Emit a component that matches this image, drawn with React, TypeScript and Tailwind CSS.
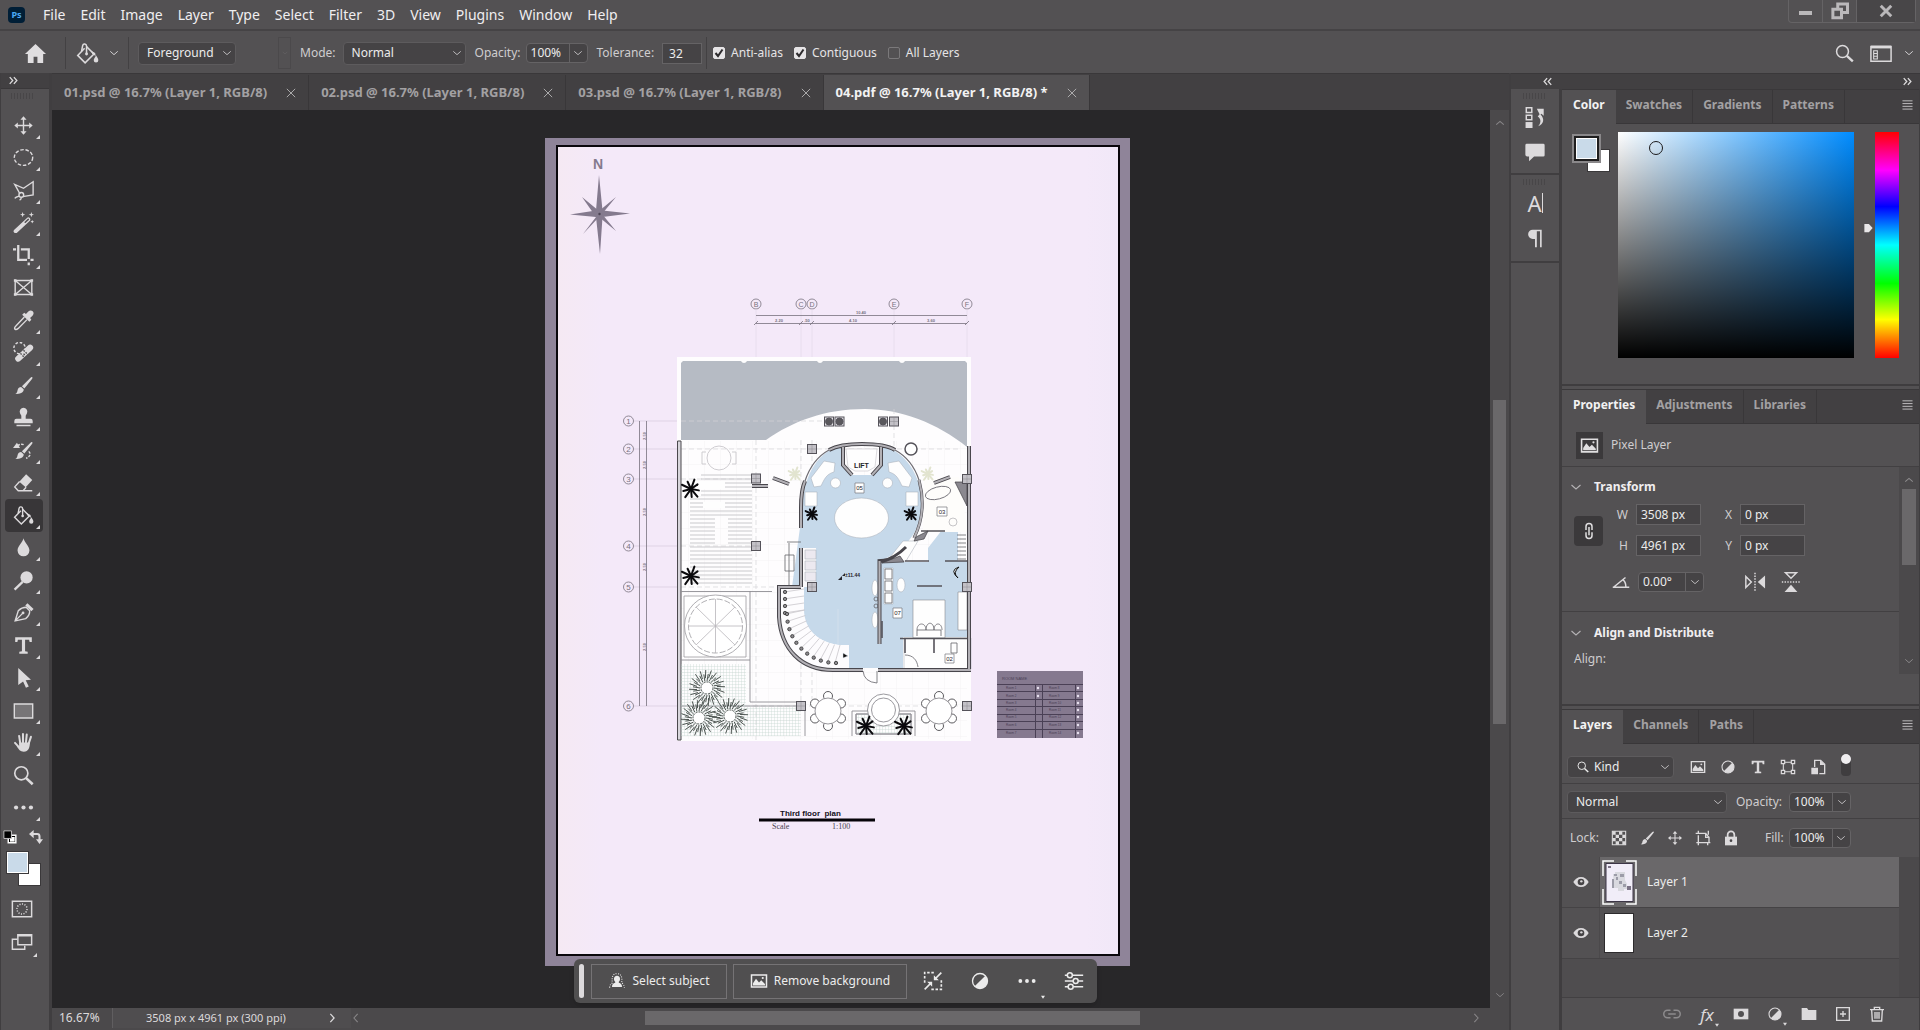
import { useState, type ReactNode } from 'react'

const line = { fill: 'none', stroke: 'currentColor', strokeWidth: 1.6 }

interface IconProps {
  children: ReactNode
  className?: string
}

function Icon({ children, className = 'h-6 w-6' }: IconProps) {
  return (
    <svg viewBox="0 0 24 24" className={`shrink-0 ${className}`} fill="currentColor" aria-hidden="true">
      {children}
    </svg>
  )
}

const moveShape = (
  <>
    <path d="M12 4v16M4 12h16" {...line} />
    <path d="M12 1.500l3.500 4h-7zM12 22.500l3.500-4h-7zM1.500 12l4-3.500v7zM22.500 12l-4-3.500v7z" />
  </>
)

const brushShape = (
  <>
    <path d="M22 2.500c.6.500.2 1.300-.3 2L13 15.300l-2.800-2.500L20 3c.7-.7 1.400-1 2-.5z" />
    <path d="M9.300 13.600l2.900 2.700c.3 3.200-3.200 5.900-9.700 5.200 2-1 2.300-2.200 2.700-4.200.5-2.400 2.200-3.700 4.100-3.700z" />
  </>
)

const bucketShape = (
  <>
    <path d="M9 6.500L1.800 14l7.700 7.700 9.200-9.200L11 4.800" {...line} />
    <path d="M11 12.500V4.200C11 2 7.600 1.200 7 3.600L5.800 9.500" {...line} />
    <circle cx="11" cy="12.500" r="1.500" />
    <path d="M21 14c1.500 2.500 2.300 3.700 2.300 5a2.400 2.400 0 0 1-4.800 0c0-1.300 1-2.500 2.500-5zM15.500 9l4.500 2.500.5 3-3.500-2z" />
  </>
)

const contrastShape = (
  <>
    <circle cx="12" cy="12" r="9" {...line} />
    <path d="M18.400 5.600a9 9 0 1 1-12.800 12.800z" />
  </>
)

const pictureShape = (
  <>
    <path d="M2 4h20v16H2z" {...line} strokeWidth="2" />
    <path d="M4 18v-3l4-6 4 5 3-3 5 5v2z" />
    <circle cx="17" cy="8" r="1.400" />
  </>
)

const searchShape = (
  <>
    <circle cx="9.500" cy="9.500" r="7.500" {...line} strokeWidth="1.900" />
    <path d="M15 15l7.500 7" {...line} strokeWidth="3" />
  </>
)

const typeShape = <path d="M2.500 2.500h19V8H19l-.6-2.600h-4.600v13.300l3 .5v2.300H7.200v-2.300l3-.5V5.400H5.600L5 8H2.500z" />

const chevronDown = <path d="M3 8l9 8 9-8" {...line} strokeWidth="2.200" />

const tools: { name: string; icon: ReactNode; flyout?: boolean }[] = [
  { name: 'Move', flyout: true, icon: moveShape },
  {
    name: 'Elliptical Marquee',
    flyout: true,
    icon: <ellipse cx="12" cy="12" rx="10.500" ry="9" {...line} strokeDasharray="4 2" />,
  },
  {
    name: 'Polygonal Lasso',
    flyout: true,
    icon: (
      <>
        <path d="M8 16L2 5l10 4.500L23 2v15l-12 2" {...line} />
        <circle cx="9.500" cy="17" r="2.700" {...line} />
        <path d="M7 18.500c-2 .5-4 1-5 2.500M9.500 20c0 1.500-1 2.500-2 3" {...line} />
      </>
    ),
  },
  {
    name: 'Magic Wand',
    flyout: true,
    icon: (
      <>
        <path d="M3 22L17.500 8.500" {...line} strokeWidth="4.500" strokeLinecap="round" />
        <path d="M14 11.700l3.500-3.200" stroke="#535153" strokeWidth="1.800" strokeLinecap="round" />
        <path d="M11 0l.8 2.200L14 3l-2.200.8L11 6l-.8-2.200L8 3l2.200-.8zM21 0l.8 2.200L24 3l-2.200.8L21 6l-.8-2.200L18 3l2.200-.8zM22 9l.6 1.400 1.400.6-1.400.6L22 13l-.6-1.400L20 11l1.400-.6z" />
      </>
    ),
  },
  {
    name: 'Crop',
    flyout: true,
    icon: <path d="M6 0v17h10M9 5h9v11M0 5h3.500M18 20v3M20 17h3.500" {...line} strokeWidth="2.600" />,
  },
  {
    name: 'Frame',
    icon: (
      <>
        <path d="M2.500 4h19v16h-19zM2.500 4l19 16M21.500 4l-19 16" {...line} />
        <path d="M1 2.500h3v3H1zM20 2.500h3v3h-3zM1 18.500h3v3H1zM20 18.500h3v3h-3z" />
      </>
    ),
  },
  {
    name: 'Eyedropper',
    flyout: true,
    icon: (
      <>
        <path d="M13 8L3 18.500c-1.500 1.500-1.500 3-.5 3.500s2 .2 3.500-1L16 11" {...line} />
        <path d="M22.500 1.500c-1.500-1.500-3.500-1.300-5 .2l-2.700 2.800-2-1.500-2.300 2.300 8.200 8.200 2.300-2.300-1.500-2 2.800-2.700c1.500-1.500 1.700-3.500.2-5z" />
      </>
    ),
  },
  {
    name: 'Spot Healing Brush',
    flyout: true,
    icon: (
      <>
        <circle cx="7.500" cy="7" r="6.500" {...line} strokeDasharray="3 2" />
        <path d="M6 19L19.500 6.500" {...line} strokeWidth="7" strokeLinecap="round" />
        <path d="M8.500 13l6 6M12 9.500l6 6M12 13.500l2.500 2" stroke="#535153" strokeWidth="1.600" strokeDasharray="2 1.300" />
      </>
    ),
  },
  { name: 'Brush', flyout: true, icon: brushShape },
  {
    name: 'Clone Stamp',
    flyout: true,
    icon: (
      <path d="M12 1a4.300 4.300 0 0 1 4 6l-1.500 3v3.500H20a2.500 2.500 0 0 1 2.500 2.500v2.500h-21V16A2.500 2.500 0 0 1 4 13.500h5.500V10L8 7a4.300 4.300 0 0 1 4-6zM4 20.200h16v1.800H4z" />
    ),
  },
  {
    name: 'History Brush',
    flyout: true,
    icon: (
      <>
        {brushShape}
        <path d="M5 6.500c3-2 6-2 8.500-.5M18 13c2 2 3 5-3 8" {...line} strokeDasharray="3 1.500" />
        <path d="M0 9l4.500-6L8 9z" />
      </>
    ),
  },
  {
    name: 'Eraser',
    flyout: true,
    icon: (
      <>
        <path d="M15 2.500L22 9l-7.500 8.500-7.300-6.500z" />
        <path d="M7.500 10.800L2 17l4 4.500h5.500l3.500-4M6 21.500h16" {...line} />
      </>
    ),
  },
  { name: 'Paint Bucket', flyout: true, icon: bucketShape },
  {
    name: 'Blur',
    flyout: true,
    icon: <path d="M12 1.500c.9 5 6.800 8.500 6.800 14A6.700 6.700 0 0 1 12 22a6.700 6.700 0 0 1-6.800-6.500c0-5.500 5.900-9 6.800-14z" />,
  },
  {
    name: 'Dodge',
    flyout: true,
    icon: (
      <>
        <circle cx="15.500" cy="8.500" r="7" />
        <path d="M1.800 22.500L11 13.500" {...line} strokeWidth="2.600" />
      </>
    ),
  },
  {
    name: 'Pen',
    flyout: true,
    icon: (
      <>
        <path d="M2.500 21.500L6 10c3-3 6-4 9-4l4 4c.5 4-1.500 6.500-4.500 9zM3 21l8-8" {...line} />
        <circle cx="11.500" cy="12.500" r="1.600" />
        <path d="M16.500 1.500l7 6.500-2.500 2.500-7-6.500z" />
      </>
    ),
  },
  { name: 'Horizontal Type', flyout: true, icon: typeShape },
  {
    name: 'Path Selection',
    flyout: true,
    icon: <path d="M6 1l14.500 13.500-6 .6 3.500 7.200-3.200 1.500-3.300-7.200L6 20.500z" />,
  },
  {
    name: 'Rectangle',
    flyout: true,
    icon: <path d="M1.500 4.500h21v16h-21z" fill="#777577" stroke="currentColor" strokeWidth="1.600" />,
  },
  {
    name: 'Hand',
    flyout: true,
    icon: (
      <>
        <path d="M8.300 13L7 4.500M11.400 12V2.200M14.800 12l.9-9M18 13l2.500-7.500M6.500 17L2.300 12.500" {...line} strokeWidth="2.300" strokeLinecap="round" />
        <path d="M7 12h12.300c0 5.500-1.500 10.500-7 10.500-4 0-6-2.500-8-6.500l2.700.5z" />
      </>
    ),
  },
  { name: 'Zoom', icon: searchShape },
  {
    name: 'Edit Toolbar',
    flyout: true,
    icon: (
      <>
        <circle cx="3.500" cy="12" r="2.400" />
        <circle cx="12" cy="12" r="2.400" />
        <circle cx="20.500" cy="12" r="2.400" />
      </>
    ),
  },
]

const menus = ['File', 'Edit', 'Image', 'Layer', 'Type', 'Select', 'Filter', '3D', 'View', 'Plugins', 'Window', 'Help']

const documents = [
  '01.psd @ 16.7% (Layer 1, RGB/8)',
  '02.psd @ 16.7% (Layer 1, RGB/8)',
  '03.psd @ 16.7% (Layer 1, RGB/8)',
  '04.pdf @ 16.7% (Layer 1, RGB/8) *',
]

function Dropdown({ label, value, className, indent = 'pl-2' }: { label: string; value: string; className: string; indent?: string }) {
  return (
    <span className={`relative flex items-center ${className}`}>
      <select
        aria-label={label}
        className={`h-full w-full appearance-none rounded-sm border border-[#5d5b5d] bg-[#454345] text-[#ececec] ${indent}`}
      >
        <option>{value}</option>
      </select>
      <Icon className="pointer-events-none absolute right-1 h-2.5 w-2.5 text-[#c4c2c4]">{chevronDown}</Icon>
    </span>
  )
}

function ValueField({ label, value, className = 'w-[62px]' }: { label: string; value: string; className?: string }) {
  return (
    <span className={`flex h-5 rounded-sm border border-[#656365] bg-[#454345] ${className}`}>
      <input aria-label={label} defaultValue={value} className="w-full min-w-0 bg-transparent pl-1 text-[#ececec]" />
      <button aria-label={`${label} slider`} className="grid w-[18px] shrink-0 place-items-center border-l border-[#656365]">
        <Icon className="h-2.5 w-2.5 text-[#c4c2c4]">{chevronDown}</Icon>
      </button>
    </span>
  )
}

function CheckOption({ label, checked }: { label: string; checked?: boolean }) {
  return (
    <label className="flex items-center gap-1.5 text-[#e6e4e6]">
      <span className="grid place-items-center">
        <input
          type="checkbox"
          defaultChecked={checked}
          className="peer col-start-1 row-start-1 h-3 w-3 appearance-none rounded-xs border border-[#7b797b] checked:border-[#e6e4e6] checked:bg-[#e6e4e6]"
        />
        <Icon className="pointer-events-none invisible col-start-1 row-start-1 h-3 w-3 text-[#2d2b2d] peer-checked:visible">
          <path d="M5 12l5 6 9-13" {...line} strokeWidth="4" />
        </Icon>
      </span>
      {label}
    </label>
  )
}

function PanelTabs({ tabs }: { tabs: string[] }) {
  return (
    <div className="flex h-[35px] shrink-0 border-t border-[#3a383a] bg-[#424042] font-bold">
      {tabs.map((tab, i) => (
        <button
          key={tab}
          className={
            i === 0
              ? 'bg-[#535153] px-[11px] pb-1 text-[#f2f2f2]'
              : 'border-r border-b border-[#393739] px-[10px] pb-1 text-[#a3a1a3]'
          }
        >
          {tab}
        </button>
      ))}
      <span className="flex-1 border-b border-[#393739]" />
      <button aria-label="Panel menu" className="border-b border-[#393739] pr-1.5 pb-1 text-[#c8c6c8]">
        <Icon className="h-[11px] w-[11px]">
          <path d="M1 4h22M1 10h22M1 16h22M1 22h22" {...line} strokeWidth="2" />
        </Icon>
      </button>
    </div>
  )
}

function Divider() {
  return <span className="mx-1 h-8 w-px bg-[#434143]" />
}

function MenuBar() {
  return (
    <header className="flex h-[31px] shrink-0 items-center border-b-2 border-[#454345] bg-[#535153]">
      <span className="ml-2 grid h-4 w-[17px] place-items-center rounded-sm bg-[#001e36] text-[9px] font-bold text-[#4ba8f5]">Ps</span>
      <nav className="ml-[10px] flex text-sm text-[#f0eef0]">
        {menus.map(menu => (
          <button key={menu} className="pr-[7px] pl-2">{menu}</button>
        ))}
      </nav>
      <div className="mr-1 mb-[6px] ml-auto flex h-[23px] self-start rounded-b border border-t-0 border-[#656365] text-[#bab8ba]">
        <button aria-label="Minimize" className="grid w-[34px] place-items-center border-r border-[#656365] pt-1">
          <span className="h-1 w-[13px] bg-current" />
        </button>
        <button aria-label="Restore" className="grid w-[34px] place-items-center border-r border-[#656365]">
          <Icon className="h-[18px] w-[18px]">
            <path d="M9 8V2.500h13V14h-6M2.500 9.500H14V21H2.500z" {...line} strokeWidth="4" />
          </Icon>
        </button>
        <button aria-label="Close" className="grid w-[58px] place-items-center bg-[#484648]">
          <Icon className="h-[14px] w-[14px]">
            <path d="M3 3l18 18M21 3L3 21" {...line} strokeWidth="5" />
          </Icon>
        </button>
      </div>
    </header>
  )
}

function OptionsBar() {
  return (
    <div className="flex h-[42px] shrink-0 items-center bg-[#535153] pt-0.5 pl-6 text-[#cfcdcf]">
      <button aria-label="Home" className="text-[#e0dee0]">
        <Icon className="h-[23px] w-[23px]">
          <path d="M12 2L1 12.500h3V22h6v-6.500h4V22h6v-9.500h3z" />
        </Icon>
      </button>
      <span className="mr-[10px] ml-[18px] h-8 w-px bg-[#434143]" />
      <button aria-label="Paint Bucket presets" className="flex items-center gap-2.5 text-[#dcdadc]">
        <Icon className="h-[23px] w-[23px]">{bucketShape}</Icon>
        <Icon className="h-2.5 w-2.5">{chevronDown}</Icon>
      </button>
      <span className="mx-[9px] h-8 w-px bg-[#434143]" />
      <Dropdown label="Fill source" value="Foreground" className="h-[23px] w-[98px]" indent="pl-2" />
      <span className="ml-[42px] grid h-8 w-[13px] place-items-center border border-[#4b494b] text-[#6a686a]">
        <Icon className="h-1.5 w-1.5">{chevronDown}</Icon>
      </span>
      <span className="ml-[9px]">Mode:</span>
      <Dropdown label="Mode" value="Normal" className="ml-[7px] h-[23px] w-[123px]" />
      <span className="ml-[9px]">Opacity:</span>
      <span className="ml-[5px]"><ValueField label="Opacity" value="100%" /></span>
      <label className="ml-[9px] flex items-center gap-[8px]">
        Tolerance:
        <input defaultValue="32" className="h-[21px] w-10 border border-[#656365] bg-[#454345] pl-1.5 text-[#ececec]" />
      </label>
      <Divider />
      <div className="ml-0.5 flex gap-[11px]">
        <CheckOption label="Anti-alias" checked />
        <CheckOption label="Contiguous" checked />
        <CheckOption label="All Layers" />
      </div>
      <div className="mr-[6px] ml-auto flex items-center gap-4 text-[#dcdadc]">
        <button aria-label="Search"><Icon className="h-[19px] w-[19px]">{searchShape}</Icon></button>
        <button aria-label="Workspace" className="flex items-center gap-3">
          <Icon className="h-6 w-[22px]">
            <path d="M1 5h22v16H1z" {...line} />
            <path d="M1 4h22v3H1z" />
            <path d="M4 9.500h4v3H4zM4 12.500h4v3H4zM4 15.500h4v3H4z" {...line} strokeWidth="1.200" />
          </Icon>
          <Icon className="h-2.5 w-2.5">{chevronDown}</Icon>
        </button>
      </div>
    </div>
  )
}

function CollapseRow({ back }: { back?: boolean }) {
  return (
    <Icon className="h-[9px] w-[9px] text-[#dcdadc]">
      <path d={back ? 'M11 3l-8 9 8 9M22 3l-8 9 8 9' : 'M2 3l8 9-8 9M13 3l8 9-8 9'} {...line} strokeWidth="3.500" />
    </Icon>
  )
}

function Grip() {
  return <span className="h-1.5 w-6 bg-[repeating-linear-gradient(to_right,#484648_0_1px,transparent_1px_3px)]" />
}

function Toolbar() {
  return (
    <aside className="flex w-[50px] shrink-0 flex-col border-x border-[#403e40] bg-[#535153] text-[#dcdadc]">
      <div className="flex h-4 shrink-0 items-center border-b border-[#3a383a] bg-[#424042] pl-2"><CollapseRow /></div>
      <div className="flex h-[20px] shrink-0 pt-1 pl-2.5"><Grip /></div>
      <div className="flex h-[715px] shrink-0 flex-col">
        {tools.map(({ name, icon, flyout }) => (
          <button
            key={name}
            aria-label={name}
            className={`relative ml-1 grid w-[38px] flex-1 place-items-center pr-0.5 ${name === 'Paint Bucket' ? 'rounded-sm bg-[#383638]' : ''}`}
          >
            <Icon className="h-[21px] w-[21px]">{icon}</Icon>
            {flyout && (
              <Icon className="absolute right-[3px] bottom-[3px] h-1 w-1"><path d="M24 0v24H0z" /></Icon>
            )}
          </button>
        ))}
      </div>
      <div className="mt-[6px] flex items-center justify-between pr-1.5 pl-0.5">
        <button aria-label="Default colors">
          <Icon className="h-[14px] w-[14px]">
            <path d="M9 9h13v13H9z" fill="#000" stroke="#fff" strokeWidth="2.500" />
            <path d="M12 12h8v8h-8z" fill="#fff" />
            <path d="M1.500 1.500h13v13h-13z" fill="#000" stroke="#d0ced0" strokeWidth="1.500" />
          </Icon>
        </button>
        <button aria-label="Switch colors">
          <Icon className="h-[14px] w-[14px]">
            <path d="M6 7h8c3 0 4 2 4 4v7" {...line} strokeWidth="3.500" />
            <path d="M0 7l8-7v14zM18 24l-6-8h12z" />
          </Icon>
        </button>
      </div>
      <div className="relative mt-[7px] ml-[5px] h-[35px] w-[35px]">
        <span className="absolute right-0 bottom-0 h-[23px] w-[23px] border border-[#3a383a] bg-white" />
        <span className="absolute top-0 left-0 h-[23px] w-[23px] border border-[#3a383a] bg-[#c9dae9] ring-1 ring-white ring-inset" />
      </div>
      <button aria-label="Quick mask" className="mt-[12px] ml-[10px] w-[22px]">
        <Icon className="h-[22px] w-[22px]">
          <path d="M1.500 3.500h21v17h-21z" {...line} />
          <circle cx="12" cy="12" r="5.500" {...line} strokeDasharray="1.200 1.600" />
        </Icon>
      </button>
      <button aria-label="Screen mode" className="relative mt-[11px] ml-[10px] w-[30px]">
        <Icon className="h-[22px] w-[22px]">
          <path d="M7 9H1.500v11H15v-4" {...line} />
          <path d="M7.500 4h15v11h-15z" {...line} />
          <path d="M7 3.500h16V6H7z" />
        </Icon>
        <Icon className="absolute right-1 -bottom-1 h-1 w-1"><path d="M24 0v24H0z" /></Icon>
      </button>
    </aside>
  )
}

/* floor plan */

const petal = (cx: number, cy: number, deg: number, r: number) => {
  const a = (deg * Math.PI) / 180
  return [cx + Math.cos(a) * r, cy + Math.sin(a) * r]
}

function Palm({ x, y, r = 10, color = '#0b0a0d' }: { x: number; y: number; r?: number; color?: string }) {
  return (
    <g stroke={color} strokeWidth="2" strokeLinecap="round">
      {[10, 50, 85, 125, 165, 205, 245, 290, 325].map((deg, i) => {
        const [ex, ey] = petal(x, y, deg, i % 2 ? r : r - 2)
        return <path key={deg} d={`M${x} ${y}L${ex} ${ey}`} />
      })}
    </g>
  )
}

function Bush({ x, y }: { x: number; y: number }) {
  return (
    <g stroke="#3b433f" strokeWidth=".9" fill="none">
      {Array.from({ length: 40 }, (_, i) => {
        const outer = i % 2 ? 18 : 14
        const [sx, sy] = petal(x, y, i * 9, i % 2 ? 10 : 7)
        const [ex, ey] = petal(x, y, i * 9 + 5, outer)
        return <path key={i} d={`M${sx} ${sy}L${ex} ${ey}`} />
      })}
      <circle cx={x} cy={y} r="6" fill="#fff" strokeDasharray="2 1" />
    </g>
  )
}

function Post({ x, y, round }: { x: number; y: number; round?: boolean }) {
  return (
    <g stroke="#55535a" strokeWidth="1">
      <rect x={x - 4.5} y={y - 4.5} width="9" height="9" fill={round ? '#e8e6ea' : '#c3c1c7'} />
      {round ? <circle cx={x} cy={y} r="3.500" fill="#5a585d" /> : <path d={`M${x} ${y - 4}v8M${x - 4} ${y}h8`} stroke="#8b898f" strokeWidth=".5" />}
    </g>
  )
}

function RoundTable({ x, y }: { x: number; y: number }) {
  return (
    <g stroke="#4a484d" fill="#fff" strokeWidth=".9">
      {[30, 90, 150, 210, 270, 330].map(deg => {
        const [cx, cy] = petal(x, y, deg, 15)
        return <circle key={deg} cx={cx} cy={cy} r="4.500" />
      })}
      <circle cx={x} cy={y} r="13" stroke="#8b898e" />
    </g>
  )
}

const gridLetters: [string, number][] = [['B', 756], ['C', 801], ['D', 812], ['E', 894], ['F', 967]]
const gridNumbers: [string, number][] = [['1', 421], ['2', 449], ['3', 479], ['4', 546], ['5', 587], ['6', 706]]
const spans: [string, number, number][] = [['2.20', 779, 322], ['.50', 807, 322], ['4.10', 853, 322], ['3.60', 931, 322], ['10.40', 861, 314]]
const stairs = Array.from({ length: 15 }, (_, i) => i)

function FloorPlan() {
  return (
    <svg viewBox="545 138 585 828" className="absolute top-7 left-[493px] h-[828px] w-[585px] font-['Liberation_Sans',sans-serif]">
      <defs>
        <pattern id="tiles" width="3" height="3" patternUnits="userSpaceOnUse">
          <path d="M0 0h3M0 0v3" stroke="#b9ccc4" strokeWidth=".6" />
        </pattern>
        <pattern id="paving" width="16" height="16" patternUnits="userSpaceOnUse">
          <path d="M0 0h16M0 0v16" stroke="#efeef1" strokeWidth=".7" />
        </pattern>
        <linearGradient id="paper" x2="1">
          <stop offset="0" stopColor="#f5e9f3" />
          <stop offset=".08" stopColor="#f4e9f9" />
          <stop offset=".94" stopColor="#f4e9f9" />
          <stop offset="1" stopColor="#f1e8f8" />
        </linearGradient>
      </defs>
      <rect x="545" y="138" width="585" height="828" fill="#8f8499" />
      <rect x="557" y="146" width="562" height="809" fill="url(#paper)" stroke="#0a070c" strokeWidth="2" />

      <g fill="#847a8e">
        <text x="598" y="169" fontSize="14" fontWeight="700" textAnchor="middle">N</text>
        <path d="M599 175l3.500 35.500L630 213.500l-27.500 3.500L600 254l-4-37-26-2.500 26-4z" />
        <path d="M582 197l17 14 17-14-14 17 14 17-17-14-16 17 13-17z" />
        <circle cx="599.500" cy="214" r="1.200" fill="#4b4254" />
      </g>

      <g stroke="#77717e" strokeWidth=".8" fill="none">
        {gridLetters.map(([letter, x]) => (
          <g key={letter}>
            <circle cx={x} cy="304" r="5" />
            <text x={x} y="306.500" fontSize="7" textAnchor="middle" fill="#77717e" stroke="none">{letter}</text>
            <path d={`M${x} 309v50`} stroke="#e6dbec" />
            <path d={`M${x - 2} 325l4-4`} />
          </g>
        ))}
        {gridNumbers.map(([n, y]) => (
          <g key={n}>
            <circle cx="628.500" cy={y} r="5" />
            <text x="628.500" y={y + 3} fontSize="8" textAnchor="middle" fill="#77717e" stroke="none">{n}</text>
            <path d={`M634 ${y}h43`} stroke="#d6cbdc" strokeWidth=".7" />
          </g>
        ))}
        <path d="M756 315.500h211M756 323.500h211M639.500 421v285M646.500 421v285" />
      </g>
      <g fill="#77717e" fontSize="4" fontWeight="700">
        {spans.map(([text, x, y]) => <text key={text} x={x} y={y} textAnchor="middle">{text}</text>)}
        {[436, 465, 512, 567, 647].map(y => (
          <text key={y} x="646" y={y} textAnchor="middle" transform={`rotate(-90 646 ${y})`}>2.50</text>
        ))}
      </g>

      {/* plot and terrace */}
      <path d="M677 357h294v384H677z" fill="#fefdfe" />
      <path d="M677 441h290v298H677z" fill="url(#paving)" />
      <path d="M681 363l2-2h58q1 2 3 2t3-2h70q1 2 3 2t3-2h76q1 2 3 2t3-2h60l2 2v84c-30-24-66-38-102-38-40 0-72 12-99 31H681z" fill="#b6bbc4" />
      <g stroke="#d6d4d9" strokeWidth=".7" strokeDasharray="5 3">
        <path d="M681 421h150M681 449h280M681 479h80M681 546h75M681 587h290M681 706h290M801 440v270M812 440v260M894 409v40M756 440v300" />
      </g>
      <path d="M677.500 441v299h3.500V441z" fill="#d8d6dc" stroke="#4a484d" strokeWidth="1" />
      <g fill="none" stroke="#c9c7cc" strokeWidth=".9">
        <circle cx="719" cy="458" r="12" />
        <path d="M706 452h-4v12h4M732 452h4v12h-4" />
      </g>
      <g stroke="#c4c3c7" strokeWidth=".9">
        {Array.from({ length: 28 }, (_, i) => {
          const y = 475 + i * 4
          return y > 518 && y < 547
            ? <path key={i} d={`M690 ${y}h25M728 ${y}h24`} />
            : <path key={i} d={`M${i < 6 ? 701 : 690} ${y}H752`} />
        })}
      </g>
      <path d="M700 481h25v8h-25zM703 502h22v6h-22z" fill="#fefefe" />
      <path d="M681 591.500h91M681 660h69M750 591v111h50M681 706h120M805 706v30" fill="none" stroke="#8f8d93" strokeWidth=".9" />
      <path d="M681 664h65v42h55v30H681z" fill="url(#tiles)" />

      {/* gazebo */}
      <g fill="#fff" stroke="#9c9aa0" strokeWidth=".8">
        <path d="M684 596h62v61h-62z" />
        <circle cx="715.500" cy="626" r="31" />
        <circle cx="715.500" cy="626" r="27" strokeDasharray="6 2" />
        <path d="M715.500 599v54M688 626h55M696 607l39 38M735 607l-39 38" stroke="#b7b5ba" />
      </g>
      <Bush x={707} y={688} />
      <Bush x={699} y={718} />
      <Bush x={730} y={716} />

      {/* blue rooms */}
      <path d="M803 505C803 475 820 449 842 446l1 18 9 11h20l9-11 1-18c22 4 40 29 40 59 0 20-12 44-42 56v1h48v-14l14-18h16v31h10v76h-65v31h-55V645h-10c-24-4-36-20-36-36v-22h-10z" fill="#c6d9ea" />
      <path d="M803 548h13v39h-13z" fill="#fbfafc" />
      <g fill="#fefefe" stroke="#a2a9b2" strokeWidth=".5">
        <ellipse cx="861.500" cy="518" rx="27" ry="20" />
        <circle cx="835.500" cy="483" r="5" />
        <circle cx="887.500" cy="483" r="5" />
        <path d="M811 478l13-17 11 2-1 9c-8 2-10 8-13 14l-7 1zM912 478l-13-17-11 2 1 9c8 2 10 8 13 14l7 1z" />
        <path d="M805 492h12v14h-12zM906 492h12v14h-12z" />
        <path d="M805 550h11v9h-11zM805 561h11v9h-11zM805 572h11v9h-11z" fill="#ece9f0" />
        <path d="M903 541h15l-12 20h-19zM884 568h9v36h-9z" />
        <path d="M913 600h32v38h-32zM958 592h9v38h-9z" stroke="#77757b" />
        <path d="M904 638h67v31h-67z" />
        <ellipse cx="901" cy="585" rx="4" ry="7" />
        <ellipse cx="875" cy="588" rx="3" ry="8" />
        <ellipse cx="875" cy="620" rx="3" ry="8" />
      </g>
      <path d="M924 479l35-2 9 55h-45z" fill="#fefdfb" />
      <g fill="none" stroke="#66646b" strokeWidth=".8">
        <ellipse cx="938" cy="493" rx="13" ry="6" transform="rotate(-15 938 493)" />
        <path d="M885 569h7v10h-7zM885 581h7v10h-7zM885 593h7v10h-7zM917 630c0-8 9-8 9 0 0-9 8-9 8 0 0-8 8-8 8 0M917 636v-6h24v6" />
        <circle cx="953" cy="522" r="4" stroke="#b8b6ba" />
        <path d="M905 655c8 0 12 5 13 12M951 643h6v10h-6zM877 671v12q-13-1-14-12" />
        {[535, 539, 543, 547, 551, 555, 559].map(y => <path key={y} d={`M957 ${y}h9`} />)}
        {[599, 606].map(y => <circle key={y} cx="876" cy={y} r="2" />)}
        <path d="M785 555h9v16h-9zM789 543v44M787 542h14" />
      </g>
      <path d="M959 567q-10 3-1 11-6-5 1-11z" stroke="#111" strokeWidth="1" fill="#fff" />

      {/* stair flight */}
      <path d="M781 587h23v22c0 20 14 34 36 36h9v23h-21c-31-3-47-28-47-54z" fill="#fdfcfe" />
      {stairs.map(i => {
        const straight = i < 4
        const deg = 180 - (i - 4) * 9
        const [ix, iy] = straight ? [804, 589 + i * 7] : petal(840, 610, deg, 35)
        const [ox, oy] = straight ? [784, 592 + i * 7] : petal(835, 614, deg, 49)
        return (
          <g key={i}>
            <path d={`M${ix} ${iy}L${ox} ${oy}`} stroke="#c9c7cc" strokeWidth=".8" />
            <circle cx={ox + 1} cy={oy} r="1.700" fill="#8b898e" stroke="#333" strokeWidth=".8" />
          </g>
        )
      })}
      <path d="M838 609v35M843 653l5 3-5 2z" fill="#111" stroke="#dfe5ec" strokeWidth=".5" />

      {/* walls: dark outline with a lighter hatched core */}
      <g fill="none" stroke="#48464c" strokeWidth="4">
        <path d="M801 587V548M801 587h-22v30c2 32 22 53 54 53h30M878 670h93M969 670V446" />
        <path d="M879.500 644v-83l14-1M801 528v-20c0-11 1-20 4-27" />
        <path d="M829 450c9-5 20-6 33-6s25 1 33 6M843 447v18l9 10M881 447v18l-9 10M773 478l16 6M934 483l16-6M752 486h16" />
        <path d="M919 480c6 22 4 40-5 58M882 561c10-2 18-8 24-14" strokeWidth="3" />
      </g>
      <g fill="none" stroke="#b3b1b6" strokeWidth="2">
        <path d="M801 587V548M801 587h-22v30c2 32 22 53 54 53h30M878 670h93M969 670V446M879.500 644v-83M801 528v-20c0-11 1-20 4-27" />
        <path d="M829 450c9-5 20-6 33-6s25 1 33 6M843 447v18l9 10M881 447v18l-9 10M773 478l16 6M934 483l16-6M752 486h16M919 480c6 22 4 40-5 58" />
      </g>
      <path d="M805 481c5-15 13-25 24-31M919 480c-5-15-13-24-24-30" fill="none" stroke="#6f6d74" strokeWidth="1.200" />
      <path d="M905 561h24M945 561h22M921 531h24M900 638.500h67M905 638v15M934 638v15M882 621v17M917 586h25" fill="none" stroke="#55535a" strokeWidth="1.600" />
      <path d="M955 482h12v24zM882 563l18-7 4 6zM916 537l12-6-4 8-10 2z" fill="#8a888f" stroke="#3f3e44" strokeWidth=".7" />
      <path d="M846 449h31l-2 18-7 4h-13l-7-4z" fill="#fefefe" stroke="#b9b7bd" strokeWidth=".5" />

      <Post x={829} y={421.5} round />
      <Post x={839.5} y={421.5} round />
      <Post x={883} y={421.5} round />
      {[[894, 421.5], [812, 449], [756, 478.5], [756, 546], [967, 479], [812, 587], [967, 587], [801, 706], [967, 706]].map(([x, y]) => (
        <Post key={`${x}-${y}`} x={x} y={y} />
      ))}
      <circle cx="911" cy="449" r="6" fill="#fff" stroke="#55535a" strokeWidth="1.500" />
      <Palm x={691} y={489} />
      <Palm x={691} y={576} />
      <Palm x={812} y={514} r={7} />
      <Palm x={911} y={514} r={7} />
      <Palm x={795} y={474} r={7} color="#e2e4d0" />
      <Palm x={928} y={474} r={7} color="#e2e4d0" />

      {/* front garden */}
      <RoundTable x={828} y={711} />
      <RoundTable x={939} y={711} />
      <g fill="none" stroke="#8f8d93" strokeWidth=".9">
        <path d="M852 736v-25h63v25M856 734v-20h55v20z" />
        <path d="M856 714h55v20h-55z" fill="url(#tiles)" />
        <circle cx="883.500" cy="710" r="16" fill="#fff" />
        <circle cx="883.500" cy="710" r="12" />
      </g>
      <Palm x={866} y={726} />
      <Palm x={904} y={726} />

      <g fill="#26252a" fontSize="6">
        <text x="861.500" y="468" fontSize="7" fontWeight="700" textAnchor="middle">LIFT</text>
        <text x="845" y="577" fontSize="5" fontWeight="700">±11.44</text>
        <path d="M838 580l4-4v4zM842 576l3-3v3z" />
        <g fill="#fff" stroke="#77757b" strokeWidth=".7">
          <path d="M855 483h9v10h-9zM893 608h9v10h-9zM937 507h10v9h-10zM945 654h9v9h-9z" />
        </g>
        <g textAnchor="middle">
          <text x="859.500" y="490">05</text>
          <text x="897.500" y="615">07</text>
          <text x="942" y="514">03</text>
          <text x="949.500" y="661">02</text>
        </g>
      </g>

      {/* room schedule */}
      <rect x="997" y="671" width="86" height="67" fill="#85798f" />
      <path d="M997 684.500h86M997 691.500h86M997 699.500h86M997 706.500h86M997 714.500h86M997 721.500h86M997 729.500h86M1035.500 684v54M1042.500 684v54M1075.500 684v54" stroke="#4a4055" strokeWidth="1" />
      <text x="1002" y="680" fontSize="4" fill="#4c4157">ROOM NAME</text>
      <g fill="#4a4055" fontSize="3">
        {[689, 697, 704, 711, 718, 726, 734].map((y, i) => (
          <g key={y}>
            <text x="1006" y={y}>Room {i + 1}</text>
            <text x="1049" y={y}>Room {i + 8}</text>
            <circle cx="1078" cy={y - 1} r="1.200" fill="#e9e2f0" />
            {i < 2 && <circle cx="1038" cy={y - 1} r="1.200" fill="#e9e2f0" />}
          </g>
        ))}
      </g>

      <text x="780" y="816" fontSize="8" fontWeight="700" fill="#15101a" xmlSpace="preserve">Third floor  plan</text>
      <path d="M759 820h116" stroke="#050308" strokeWidth="3" />
      <g fill="#4a4350" fontSize="8" className="font-['Liberation_Serif',serif]">
        <text x="772" y="829">Scale</text>
        <text x="832" y="829">1:100</text>
      </g>
    </svg>
  )
}

function ContextBar() {
  return (
    <div className="absolute bottom-[5px] left-[522px] flex h-11 items-center rounded-md bg-[#504f50] px-[5px] text-[#ececec] shadow-md">
      <span className="mr-[7px] h-[34px] w-[5px] rounded bg-[#dcdadc]" />
      <button className="flex h-[35px] w-[136px] items-center justify-center gap-2 border border-[#757375]">
        <Icon className="h-4 w-4">
          <path d="M12 4a4.500 4.500 0 0 1 4.500 5c0 2-.8 3.300-1.800 4.300v1.500c3.300 1 4.800 2.500 4.800 6.200H4.500c0-3.700 1.500-5.200 4.800-6.200v-1.500c-1-1-1.800-2.300-1.800-4.300A4.500 4.500 0 0 1 12 4z" />
          <path d="M1 22c0-4 2-6 4-7-1-8 0-14 7-14s8 6 7 14c2 1 4 3 4 7" {...line} strokeDasharray="1.500 2" />
        </Icon>
        Select subject
      </button>
      <button className="mr-[16px] ml-1.5 flex h-[35px] w-[174px] items-center justify-center gap-1.5 border border-[#757375]">
        <Icon className="h-[18px] w-[18px]">{pictureShape}</Icon>
        Remove background
      </button>
      <div className="flex items-center gap-[27px] pr-2">
        <button aria-label="Transform selection">
          <Icon className="h-5 w-5">
            <path d="M2 14V2h12M10 22h12V10" {...line} strokeWidth="2" strokeDasharray="3 2" />
            <path d="M22 2l-7 7M2 22l7-7" {...line} strokeWidth="2" />
            <path d="M13 5v6h6zM11 19v-6H5z" />
          </Icon>
        </button>
        <button aria-label="Adjustment"><Icon className="h-5 w-5">{contrastShape}</Icon></button>
        <button aria-label="More options" className="relative">
          <Icon className="h-5 w-5">
            <circle cx="4" cy="12" r="2.300" />
            <circle cx="12" cy="12" r="2.300" />
            <circle cx="20" cy="12" r="2.300" />
          </Icon>
          <Icon className="absolute -right-2 -bottom-2 h-1 w-1"><path d="M0 4h24L12 22z" /></Icon>
        </button>
        <button aria-label="Properties">
          <Icon className="h-5 w-5">
            <path d="M1 5h3M10 5h13M1 12h10M17 12h6M1 19h4M11 19h12" {...line} strokeWidth="1.800" />
            <g {...line} strokeWidth="1.800">
              <circle cx="7" cy="5" r="3" />
              <circle cx="14" cy="12" r="3" />
              <circle cx="8" cy="19" r="3" />
            </g>
          </Icon>
        </button>
      </div>
    </div>
  )
}

function Workspace() {
  const [active, setActive] = useState(3)
  return (
    <main className="flex min-w-0 flex-1 flex-col border-x-2 border-[#403e40]">
      <div className="flex h-[37px] shrink-0 border-t border-[#3a383a] bg-[#424042] pt-px">
        {documents.map((name, i) => (
          <div
            key={name}
            className={`flex items-center border-r border-[#393739] px-3 ${i === active ? 'bg-[#535153] text-[#f2f2f2]' : 'text-[#a3a1a3]'}`}
          >
            <button className="text-[13px] font-bold" onClick={() => setActive(i)}>{name}</button>
            <button aria-label={`Close ${name}`} className="ml-[19px] text-[#b5b3b5]">
              <Icon className="h-2.5 w-2.5"><path d="M2 2l20 20M22 2L2 22" {...line} strokeWidth="2.200" /></Icon>
            </button>
          </div>
        ))}
      </div>
      <div className="flex min-h-0 flex-1">
        <div className="relative min-w-0 flex-1 overflow-hidden bg-[#282729]">
          <FloorPlan />
          <ContextBar />
        </div>
        <div className="flex w-[19px] flex-col items-center bg-[#4b494b] py-2 text-[#888688]">
          <Icon className="h-2.5 w-2.5"><path d="M3 16l9-8 9 8" {...line} strokeWidth="2.500" /></Icon>
          <span className="mt-[272px] h-[324px] w-[13px] bg-[#6a686a]" />
          <Icon className="mt-auto h-2.5 w-2.5">{chevronDown}</Icon>
        </div>
      </div>
      <footer className="flex h-[22px] shrink-0 items-center bg-[#4b494b] pb-0.5 text-[#dcdadc]">
        <span className="w-[60px] pl-[7px]">16.67%</span>
        <span className="flex h-full w-[239px] items-center justify-between border-l border-[#605e60] bg-[#4f4d4f] pr-3.5 pl-[33px] text-[11px]">
          3508 px x 4961 px (300 ppi)
          <Icon className="h-2.5 w-2.5"><path d="M8 2l9 10-9 10" {...line} strokeWidth="3" /></Icon>
        </span>
        <span className="flex h-full flex-1 items-center pr-7 text-[#888688]">
          <Icon className="h-2.5 w-2.5"><path d="M16 2L7 12l9 10" {...line} strokeWidth="2.500" /></Icon>
          <span className="ml-[284px] h-[14px] w-[495px] bg-[#6a686a]" />
          <Icon className="ml-auto h-2.5 w-2.5"><path d="M8 2l9 10-9 10" {...line} strokeWidth="2.500" /></Icon>
        </span>
      </footer>
    </main>
  )
}

function Dock() {
  const cell = 'grid h-[35px] w-full place-items-center'
  return (
    <div className="flex w-[50px] shrink-0 flex-col items-center border-r-2 border-[#3f3d3f] text-[#dcdadc]">
      <div className="flex flex-col items-center self-stretch border-b-2 border-[#403e40] pt-1 pb-1">
        <Grip />
        <button aria-label="History" className={cell}>
          <Icon className="h-[22px] w-[22px]">
            <path d="M2.500 2h6v5h-6zM2.500 10h6v5h-6z" {...line} />
            <path d="M1.700 17.500h7.600V24H1.700z" />
            <path d="M14 3h7.500v7.500L19 8.500l-1 .7c4.500 4.500 4 10-2.500 13 4-5 2.500-8.500-.5-10.700l2-2.500z" />
          </Icon>
        </button>
        <button aria-label="Comments" className={cell}>
          <Icon className="h-[22px] w-[22px]"><path d="M2 3h19q1.500 0 1.500 1.500v11Q22.500 17 21 17H11l-5.500 5v-5H3.500Q1.500 17 1.500 15V4.500Q1.500 3 3 3z" /></Icon>
        </button>
      </div>
      <div className="flex flex-col items-center self-stretch border-b-2 border-[#403e40] pt-1 pb-1.5">
        <Grip />
        <button aria-label="Character" className={`${cell} text-[22px] leading-none`}>
          <span className="border-r border-[#dcdadc] leading-5">A</span>
        </button>
        <button aria-label="Paragraph" className={cell}>
          <Icon className="h-[22px] w-[22px]">
            <path d="M13 3v10H9.500a5 5 0 0 1 0-10zM12 3h2v19h-2zM17.500 3h1.800v19h-1.800zM10 3h9v1.500h-9z" />
          </Icon>
        </button>
      </div>
    </div>
  )
}

function ColorPanel() {
  return (
    <section className="flex h-[297px] shrink-0 flex-col border-b-2 border-[#3f3d3f]">
      <PanelTabs tabs={['Color', 'Swatches', 'Gradients', 'Patterns']} />
      <div className="flex items-start pt-2 pr-[20px] pl-3">
        <div className="relative mt-1 h-9 w-9">
          <span className="absolute right-0 bottom-0 h-[23px] w-[23px] border border-[#3a383a] bg-white" />
          <span className="absolute top-0 left-0 grid h-[25px] w-[25px] place-items-center border-2 border-[#1f1e1f] bg-white ring-2 ring-[#8a888a]">
            <span className="h-[19px] w-[19px] bg-[#c9dae9]" />
          </span>
        </div>
        <div className="relative ml-2 h-[226px] min-w-0 flex-1 bg-[linear-gradient(to_top,#000,transparent),linear-gradient(to_right,#fff,#008cff)]">
          <span className="absolute top-[9px] left-[31px] h-3.5 w-3.5 rounded-full border border-[#1b1a1b]" />
        </div>
        <div className="relative ml-[21px] h-[226px] w-6 bg-[linear-gradient(to_bottom,#f00,#f0f_17%,#00f_33%,#0ff_50%,#0f0_67%,#ff0_83%,#f00)]">
          <Icon className="absolute top-[91px] -left-[11px] h-[10px] w-[9px] text-[#e8e6e8]"><path d="M1 1h12l10 11-10 11H1z" /></Icon>
        </div>
      </div>
    </section>
  )
}

function SizeInput({ label, value }: { label: string; value: string }) {
  return (
    <label className="flex items-center gap-2">
      <span className="w-3 text-right">{label}</span>
      <input defaultValue={value} className="h-[21px] w-[65px] border border-[#656365] bg-[#454345] pl-1 text-[#ececec]" />
    </label>
  )
}

function PropertiesPanel() {
  return (
    <section className="mt-[3px] flex h-[317px] shrink-0 flex-col border-b-2 border-[#3f3d3f] text-[#cfcdcf]">
      <PanelTabs tabs={['Properties', 'Adjustments', 'Libraries']} />
      <div className="flex h-[43px] shrink-0 items-center gap-2 border-b border-[#424042] pl-3.5">
        <span className="grid h-[27px] w-[27px] place-items-center bg-[#3b393b] text-[#e0dee0]">
          <Icon className="h-[19px] w-[19px]">{pictureShape}</Icon>
        </span>
        Pixel Layer
      </div>
      <div className="flex">
        <div className="flex-1">
          <div className="h-[145px] border-b border-[#424042] pt-3">
            <h3 className="flex items-center gap-3 pl-2 leading-4 font-bold text-[#f0eef0]">
              <Icon className="h-3 w-3 text-[#b5b3b5]">{chevronDown}</Icon>
              Transform
            </h3>
            <div className="flex pt-[9px] pl-3">
              <button aria-label="Link width and height" className="mt-[12px] grid h-[30px] w-[29px] place-items-center rounded-sm bg-[#3b393b] text-[#e0dee0]">
                <Icon className="h-[18px] w-[18px]">
                  <path d="M9 9.500H8V6a4 4 0 0 1 8 0v3.500h-1M9 14.500H8V18a4 4 0 0 0 8 0v-3.500h-1M12 6.500v11" {...line} strokeWidth="2" />
                </Icon>
              </button>
              <div className="ml-[13px] grid grid-cols-[auto_auto] gap-x-[19px] gap-y-2.5">
                <SizeInput label="W" value="3508 px" />
                <SizeInput label="X" value="0 px" />
                <SizeInput label="H" value="4961 px" />
                <SizeInput label="Y" value="0 px" />
              </div>
            </div>
            <div className="flex items-center pt-[15px] pl-[50px] text-[#dcdadc]">
              <Icon className="mr-2 h-[18px] w-[18px]">
                <path d="M1 19h22M2 19L18 6M14 8.500c3 2 4.500 6 4.500 10" {...line} strokeWidth="2" />
              </Icon>
              <ValueField label="Angle" value="0.00°" className="w-[66px]" />
              <button aria-label="Flip horizontal" className="ml-10">
                <Icon className="h-[22px] w-[22px]">
                  <path d="M2 6l6 6-6 6z" {...line} />
                  <path d="M23 5v14l-8-7z" />
                  <path d="M12 2v20" {...line} strokeDasharray="1.500 1.500" />
                </Icon>
              </button>
              <button aria-label="Flip vertical" className="ml-[14px]">
                <Icon className="h-[22px] w-[22px]">
                  <path d="M6 2h12l-6 6z" {...line} />
                  <path d="M5 23h14l-7-8z" />
                  <path d="M2 12h20" {...line} strokeDasharray="1.500 1.500" />
                </Icon>
              </button>
            </div>
          </div>
          <h3 className="flex items-center gap-3 pt-[13px] pl-2 leading-4 font-bold text-[#f0eef0]">
            <Icon className="h-3 w-3 text-[#b5b3b5]">{chevronDown}</Icon>
            Align and Distribute
          </h3>
          <p className="pt-2.5 pl-3 leading-4">Align:</p>
        </div>
        <div className="flex h-[207px] w-5 flex-col items-center bg-[#4b494b] py-2 text-[#8d8b8d]">
          <Icon className="h-2.5 w-2.5"><path d="M3 16l9-8 9 8" {...line} strokeWidth="2.500" /></Icon>
          <span className="mt-1 h-[76px] w-3.5 bg-[#6a686a]" />
          <Icon className="mt-auto h-2.5 w-2.5">{chevronDown}</Icon>
        </div>
      </div>
    </section>
  )
}

const filterIcons: [string, ReactNode][] = [
  ['Filter pixel layers', pictureShape],
  ['Filter adjustment layers', contrastShape],
  ['Filter type layers', typeShape],
  [
    'Filter shape layers',
    <g>
      <path d="M5 5h14v14H5z" {...line} />
      <path d="M2 2h5v5H2zM17 2h5v5h-5zM2 17h5v5H2zM17 17h5v5h-5z" fill="#535153" stroke="currentColor" strokeWidth="1.800" />
    </g>,
  ],
  [
    'Filter smart objects',
    <g>
      <path d="M7 12V2h9l6 6v14h-8" {...line} strokeWidth="2" />
      <path d="M15 2v7h7M2 13h10v10H2z" />
    </g>,
  ],
]

const lockIcons: [string, ReactNode][] = [
  [
    'Lock transparent pixels',
    <g>
      <path d="M2 2h20v20H2z" {...line} />
      <path d="M2 2h5v5H2zM12 2h5v5h-5zM7 7h5v5H7zM17 7h5v5h-5zM2 12h5v5H2zM12 12h5v5h-5zM7 17h5v5H7zM17 17h5v5h-5z" />
    </g>,
  ],
  ['Lock image pixels', brushShape],
  ['Lock position', moveShape],
  ['Prevent auto-nesting', <path d="M5 1v5M1 5h15v6h5v8h2M5 8v15M2 19h17v4M16 5l5 6M20 1v6" {...line} strokeWidth="2" />],
  [
    'Lock all',
    <g>
      <path d="M7 11V7a5 5 0 0 1 10 0v4" {...line} strokeWidth="2.600" />
      <path d="M3 10h18v13H3z" />
      <circle cx="12" cy="16" r="2" fill="#454345" />
    </g>,
  ],
]

const layerActions: [string, ReactNode][] = [
  [
    'Add mask',
    <g>
      <path d="M1 4h22v16H1z" />
      <circle cx="12" cy="12" r="4.500" fill="#535153" />
    </g>,
  ],
  ['New adjustment layer', contrastShape],
  ['New group', <path d="M1 3h8l2 3h12v15H1z" />],
  ['New layer', <path d="M2.500 2.500h19v19h-19zM12 7.500v9M7.500 12h9" {...line} strokeWidth="2" />],
  [
    'Delete layer',
    <g {...line} strokeWidth="2">
      <path d="M1.500 5.500h21M8 5V2h8v3M4 6l1 16.500h14L20 6" />
      <path d="M9 9v10M12 9v10M15 9v10" />
    </g>,
  ],
]

function LayerRow({ name, selected, children }: { name: string; selected?: boolean; children: ReactNode }) {
  return (
    <li className="flex h-[51px] border-b border-[#454345] bg-[#535153]">
      <button aria-label={`Toggle ${name}`} className="grid w-[38px] place-items-center border-r border-[#4b494b] text-[#dcdadc]">
        <Icon className="h-4 w-4">
          <path d="M12 4.500c5 0 9 3 11.500 7.500C21 16.500 17 19.500 12 19.500S3 16.500.5 12C3 7.500 7 4.500 12 4.500z" />
          <circle cx="12" cy="12" r="5" fill="#464446" />
          <circle cx="12.500" cy="11" r="1.800" />
        </Icon>
      </button>
      <div className={`flex flex-1 items-center text-[#ececec] ${selected ? 'bg-[#6a686a]' : ''}`}>
        {children}
        <span className="ml-2.5 pb-px">{name}</span>
      </div>
    </li>
  )
}

function Flyout() {
  return <Icon className="absolute -right-1 -bottom-1 h-1 w-1"><path d="M0 4h24L12 22z" /></Icon>
}

function LayersPanel() {
  return (
    <section className="mt-[3px] flex min-h-0 flex-1 flex-col text-[#cfcdcf]">
      <PanelTabs tabs={['Layers', 'Channels', 'Paths']} />
      <div className="flex h-[40px] shrink-0 items-center border-b border-[#424042] pt-1.5 pl-[5px]">
        <span className="relative flex items-center">
          <Dropdown label="Filter by" value="Kind" className="h-[22px] w-[107px]" indent="pl-[26px]" />
          <Icon className="pointer-events-none absolute left-2.5 h-3 w-3 text-[#ececec]">{searchShape}</Icon>
        </span>
        <div className="ml-4 flex gap-[14px] text-[#dcdadc]">
          {filterIcons.map(([label, icon]) => (
            <button key={label} aria-label={label}><Icon className="h-4 w-4">{icon}</Icon></button>
          ))}
        </div>
        <button aria-label="Toggle filtering" className="mb-1 ml-[15px] flex h-[22px] w-[10px] items-start rounded bg-[#3f3d3f]">
          <span className="h-[10px] w-[10px] rounded-full bg-[#f0eef0]" />
        </button>
      </div>
      <div className="flex h-[35px] shrink-0 items-center border-b border-[#424042] pt-0.5 pl-[5px]">
        <Dropdown label="Blend mode" value="Normal" className="h-[22px] w-[160px]" />
        <span className="ml-[9px] w-[53px]">Opacity:</span>
        <ValueField label="Layer opacity" value="100%" />
      </div>
      <div className="flex h-[38px] shrink-0 items-center pl-2">
        Lock:
        <div className="ml-3 flex gap-[12px] text-[#dcdadc]">
          {lockIcons.map(([label, icon]) => (
            <button key={label} aria-label={label}><Icon className="h-4 w-4">{icon}</Icon></button>
          ))}
        </div>
        <span className="ml-[26px] w-6">Fill:</span>
        <ValueField label="Layer fill" value="100%" />
      </div>
      <div className="flex min-h-0 flex-1 border-b border-[#424042] bg-[#4f4d4f]">
        <ul className="flex-1">
          <LayerRow name="Layer 1" selected>
            <svg viewBox="0 0 35 45" className="ml-0.5 h-[45px] w-[35px]" fill="none">
              <path d="M4 3.500h27v38H4z" fill="#f1edf8" stroke="#3c3546" />
              <path d="M6 7h3" stroke="#7c7486" strokeWidth="2" />
              <path d="M25 26h4v4h-4z" fill="#7c7486" />
              <path d="M11 14h2v-2h10v8l2 4v5h-3v2h-6v-3h-4z" fill="#d9d9df" />
              <path d="M12 14h3v2h-3zM18 14h4v3h-4zM10 19h2v9h-2zM17 21h3v3h-3zM21 24h3v3h-3zM14 17h2v3h-2z" fill="#9c9ca8" />
              <path d="M1 16V1h11M24 1h10v15M34 29v15H24M12 44H1V29" stroke="#fff" strokeWidth="1.500" />
            </svg>
          </LayerRow>
          <LayerRow name="Layer 2">
            <span className="mr-[3px] ml-[4px] h-10 w-[30px] border border-[#2d2b2d] bg-white" />
          </LayerRow>
        </ul>
        <span className="w-5 bg-[#4b494b]" />
      </div>
      <div className="flex h-8 shrink-0 items-center justify-end gap-[18px] pr-[34px] text-[#dcdadc]">
        <button aria-label="Link layers" className="text-[#8d8b8d]">
          <Icon className="h-[18px] w-[18px]"><path d="M10 7H6a5 5 0 0 0 0 10h4M14 7h4a5 5 0 0 1 0 10h-4M7 12h10" {...line} strokeWidth="2" /></Icon>
        </button>
        <button aria-label="Layer style" className="relative w-4 text-[17px] leading-none italic">
          fx
          <Flyout />
        </button>
        {layerActions.map(([label, icon]) => (
          <button key={label} aria-label={label} className="relative">
            <Icon className="h-4 w-4">{icon}</Icon>
            {label === 'New adjustment layer' && <Flyout />}
          </button>
        ))}
      </div>
    </section>
  )
}

export default function App() {
  return (
    <div className="flex h-screen flex-col overflow-hidden bg-[#535153] font-['Noto_Sans','Open_Sans',sans-serif] text-[12px]">
      <MenuBar />
      <OptionsBar />
      <div className="flex min-h-0 flex-1">
        <Toolbar />
        <Workspace />
        <div className="flex w-[409px] shrink-0 flex-col">
          <div className="flex h-4 shrink-0 items-center justify-between border-t border-[#3a383a] bg-[#424042] pr-2 pl-8">
            <CollapseRow back />
            <CollapseRow />
          </div>
          <div className="flex min-h-0 flex-1">
            <Dock />
            <div className="flex min-w-0 flex-1 flex-col border-x border-[#3f3d3f]">
              <ColorPanel />
              <PropertiesPanel />
              <LayersPanel />
            </div>
          </div>
        </div>
      </div>
    </div>
  )
}
